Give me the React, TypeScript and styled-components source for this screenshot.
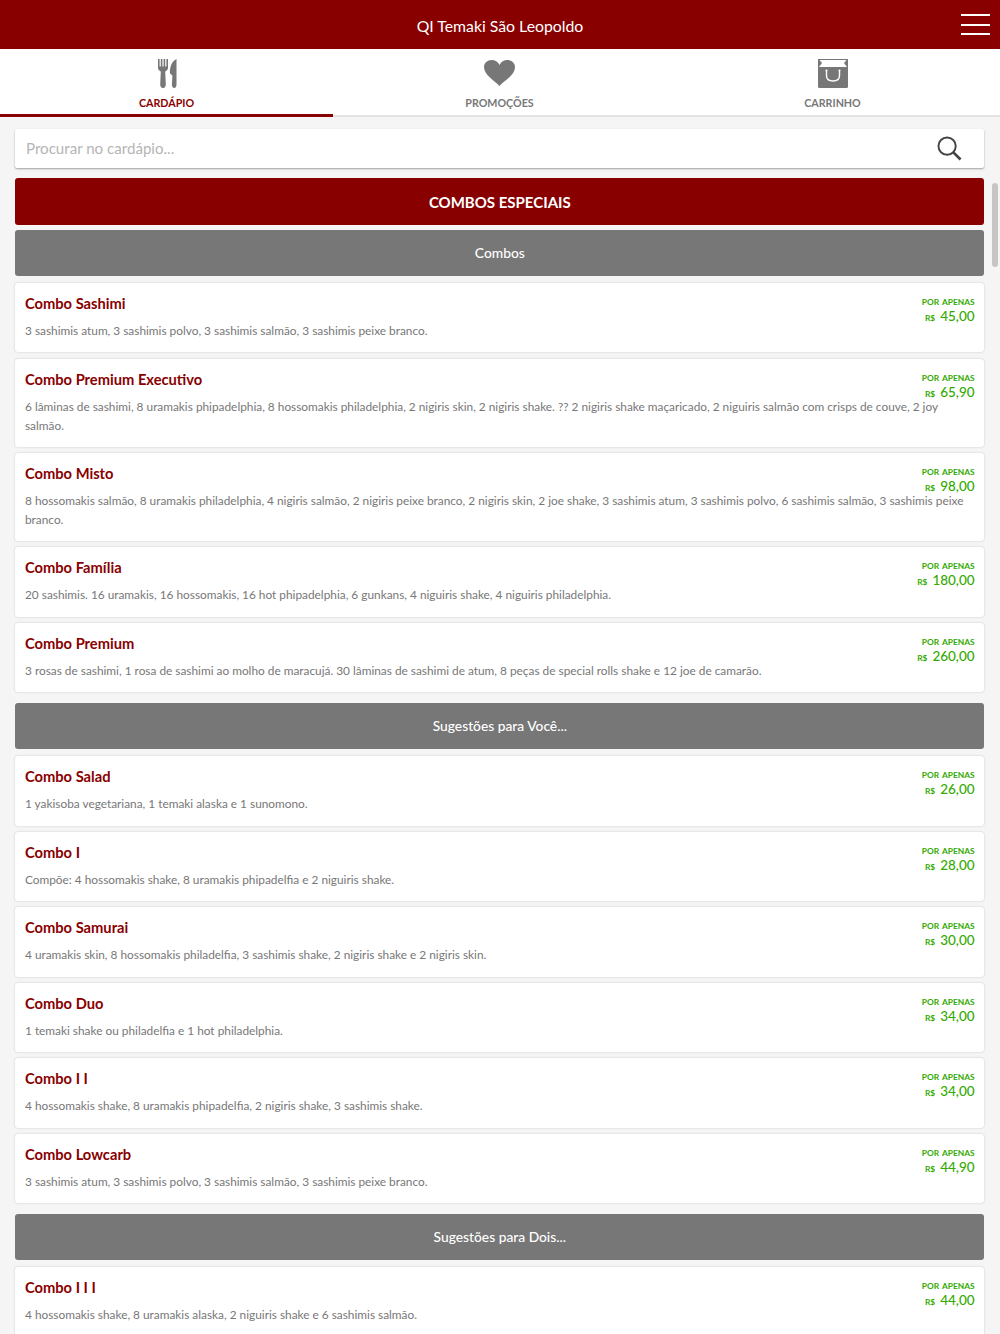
import React from "react";
import styled, { createGlobalStyle } from "styled-components";

const RED = "#880000";
const GRAY = "#777777";
const FONT = `Lato, "Open Sans", sans-serif`;

type Item = { name: string; desc: string; price: string };
type Group = { title: string; items: Item[] };

const groups: Group[] = [
  {
    title: "Combos",
    items: [
      { name: "Combo Sashimi", desc: "3 sashimis atum, 3 sashimis polvo, 3 sashimis salmão, 3 sashimis peixe branco.", price: "45,00" },
      { name: "Combo Premium Executivo", desc: "6 lâminas de sashimi, 8 uramakis phipadelphia, 8 hossomakis philadelphia, 2 nigiris skin, 2 nigiris shake. ?? 2 nigiris shake maçaricado, 2 niguiris salmão com crisps de couve, 2 joy salmão.", price: "65,90" },
      { name: "Combo Misto", desc: "8 hossomakis salmão, 8 uramakis philadelphia, 4 nigiris salmão, 2 nigiris peixe branco, 2 nigiris skin, 2 joe shake, 3 sashimis atum, 3 sashimis polvo, 6 sashimis salmão, 3 sashimis peixe branco.", price: "98,00" },
      { name: "Combo Família", desc: "20 sashimis. 16 uramakis, 16 hossomakis, 16 hot phipadelphia, 6 gunkans, 4 niguiris shake, 4 niguiris philadelphia.", price: "180,00" },
      { name: "Combo Premium", desc: "3 rosas de sashimi, 1 rosa de sashimi ao molho de maracujá. 30 lâminas de sashimi de atum, 8 peças de special rolls shake e 12 joe de camarão.", price: "260,00" },
    ],
  },
  {
    title: "Sugestões para Você...",
    items: [
      { name: "Combo Salad", desc: "1 yakisoba vegetariana, 1 temaki alaska e 1 sunomono.", price: "26,00" },
      { name: "Combo I", desc: "Compõe: 4 hossomakis shake, 8 uramakis phipadelfia e 2 niguiris shake.", price: "28,00" },
      { name: "Combo Samurai", desc: "4 uramakis skin, 8 hossomakis philadelfia, 3 sashimis shake, 2 nigiris shake e 2 nigiris skin.", price: "30,00" },
      { name: "Combo Duo", desc: "1 temaki shake ou philadelfia e 1 hot philadelphia.", price: "34,00" },
      { name: "Combo I I", desc: "4 hossomakis shake, 8 uramakis phipadelfia, 2 nigiris shake, 3 sashimis shake.", price: "34,00" },
      { name: "Combo Lowcarb", desc: "3 sashimis atum, 3 sashimis polvo, 3 sashimis salmão, 3 sashimis peixe branco.", price: "44,90" },
    ],
  },
  {
    title: "Sugestões para Dois...",
    items: [
      { name: "Combo I I I", desc: "4 hossomakis shake, 8 uramakis alaska, 2 niguiris shake e 6 sashimis salmão.", price: "44,00" },
    ],
  },
];

const GlobalStyle = createGlobalStyle`
  html, body {
    margin: 0;
    height: 1334px;
    overflow: hidden;
    background: #f5f5f5;
    font-family: ${FONT};
  }
  * { box-sizing: border-box; }
`;

const Header = styled.header`
  height: 49px;
  background: ${RED};
  color: #fff;
  display: flex;
  align-items: center;
  justify-content: center;
  font-size: 15.8px;
  padding-top: 2px;
  position: relative;
`;

const MenuButton = styled.div`
  position: absolute;
  top: 14px;
  right: 10px;
  width: 29px;
  height: 21px;
  display: flex;
  flex-direction: column;
  justify-content: space-between;
  span {
    height: 2px;
    background: #fff;
  }
`;

const Tabs = styled.nav`
  height: 68px;
  background: #fff;
  display: flex;
  padding-right: 1px;
  border-bottom: 2px solid #e3e3e3;
`;

const Tab = styled.div<{ $active?: boolean }>`
  flex: 1;
  height: 68px;
  display: flex;
  flex-direction: column;
  align-items: center;
  padding-top: 9px;
  font-size: 10.7px;
  font-weight: 700;
  color: ${({ $active }) => ($active ? RED : GRAY)};
  border-bottom: ${({ $active }) => ($active ? `3px solid ${RED}` : "none")};
  svg {
    display: block;
    height: 31px;
    margin-bottom: 7px;
  }
`;

const Content = styled.main`
  padding: 12px 15.7px 0 15.3px;
`;

const Search = styled.div`
  height: 38.5px;
  background: #fff;
  border-radius: 2px;
  box-shadow: 0 1px 2px rgba(0, 0, 0, 0.35);
  display: flex;
  align-items: center;
  justify-content: space-between;
  padding: 0 22.5px 0 10.7px;
  font-size: 15.1px;
  color: #b5b5b5;
  margin-bottom: 10.5px;
`;

const Banner = styled.h1`
  margin: 0 0 5px;
  height: 47px;
  background: ${RED};
  color: #fff;
  border-radius: 3px;
  font-size: 15px;
  font-weight: 700;
  display: flex;
  align-items: center;
  justify-content: center;
`;

const GroupBox = styled.section`
  margin-bottom: 11px;
`;

const GroupTitle = styled.h2`
  margin: 0 0 7.2px;
  height: 46px;
  background: ${GRAY};
  color: #fff;
  border-radius: 3px;
  font-size: 13.8px;
  font-weight: 500;
  padding-bottom: 1px;
  display: flex;
  align-items: center;
  justify-content: center;
`;

const Card = styled.article`
  position: relative;
  background: #fff;
  border-radius: 3px;
  box-shadow: 0 0 2px rgba(0, 0, 0, 0.22);
  padding: 10px 9.7px 11.45px;
  margin-bottom: 6.3px;
`;

const Name = styled.h3`
  margin: 0 0 8px;
  color: ${RED};
  font-size: 14.7px;
  font-weight: 700;
  line-height: 21px;
`;

const Desc = styled.p`
  margin: 0;
  color: ${GRAY};
  font-size: 11.85px;
  line-height: 18.8px;
`;

const Price = styled.div`
  position: absolute;
  top: 13px;
  right: 9.7px;
  text-align: right;
  color: #33aa00;
`;

const PriceLabel = styled.div`
  font-size: 8.4px;
  line-height: 12px;
  font-weight: 700;
  word-spacing: 1px;
`;

const PriceValue = styled.div`
  font-size: 13.5px;
  line-height: 16.5px;
  font-weight: 500;
  small {
    font-size: 8.4px;
    font-weight: 700;
    margin-right: 5px;
  }
`;

const ScrollThumb = styled.div`
  position: absolute;
  top: 183px;
  left: 992px;
  width: 6px;
  height: 84px;
  border-radius: 3px;
  background: #c6c6c6;
`;

const ForkKnife = () => (
  <svg viewBox="0 0 20 31" width="20" fill={GRAY}>
    <path d="M1 1h1.600v7.500h1.200V1h1.600v7.500h1.200V1h1.600v7.500h1.200V1H11v9c0 2-1.800 3-2.800 3.500l.6 13c0 1.800-1 3.500-2.800 3.500s-2.800-1.700-2.800-3.500l.6-13C2.800 13 1 12 1 10z" />
    <path d="M19.500 1v25.500c0 2-.9 3.500-2.300 3.500s-2.300-1.500-2.300-3.500l.5-9-2.400-2C12.500 9 15 3 19.500 1z" />
  </svg>
);

const Heart = () => (
  <svg viewBox="0 0 31 31" width="31" fill={GRAY}>
    <path d="M15.500 28C10 22 0 17 0 9 0 5 3.500 2 7.500 2 11 2 14 3.500 15.500 7 17 3.500 20 2 23.500 2 27.500 2 31 5 31 9 31 17 21 22 15.500 28z" />
  </svg>
);

const Bag = () => (
  <svg viewBox="0 0 30 31" width="30">
    <path fill={GRAY} d="M0 1h30v27.500a1.500 1.500 0 0 1-1.500 1.500h-27A1.500 1.500 0 0 1 0 28.500z" />
    <path fill="#fff" d="M1.500 2h27L26 5l3 4H1l3-4z" />
    <path fill="none" stroke="#fff" strokeWidth="1.400" strokeLinecap="round" d="M8.500 13.500v4c0 3.500 2.800 5.500 6.500 5.500s6.500-2 6.500-5.500v-4" />
    <circle cx="8.500" cy="12.500" r="1.100" fill="#fff" />
    <circle cx="21.500" cy="12.500" r="1.100" fill="#fff" />
  </svg>
);

const SearchIcon = () => (
  <svg viewBox="0 0 26 26" width="25" height="25" fill="none" stroke="#444" strokeWidth="2">
    <circle cx="10.500" cy="10.500" r="9" />
    <path d="M17 17l7.500 7.500" strokeWidth="2.800" />
  </svg>
);

const App: React.FC = () => {
  return (
    <>
      <GlobalStyle />
      <Header>
        QI Temaki São Leopoldo
        <MenuButton>
          <span />
          <span />
          <span />
        </MenuButton>
      </Header>
      <Tabs>
        <Tab $active>
          <ForkKnife />
          CARDÁPIO
        </Tab>
        <Tab>
          <Heart />
          PROMOÇÕES
        </Tab>
        <Tab>
          <Bag />
          CARRINHO
        </Tab>
      </Tabs>
      <Content>
        <Search>
          Procurar no cardápio...
          <SearchIcon />
        </Search>
        <Banner>COMBOS ESPECIAIS</Banner>
        {groups.map((group) => (
          <GroupBox key={group.title}>
            <GroupTitle>{group.title}</GroupTitle>
            {group.items.map((item) => (
              <Card key={item.name}>
                <Price>
                  <PriceLabel>POR APENAS</PriceLabel>
                  <PriceValue>
                    <small>R$</small>
                    {item.price}
                  </PriceValue>
                </Price>
                <Name>{item.name}</Name>
                <Desc>{item.desc}</Desc>
              </Card>
            ))}
          </GroupBox>
        ))}
      </Content>
      <ScrollThumb />
    </>
  );
};

export default App;
